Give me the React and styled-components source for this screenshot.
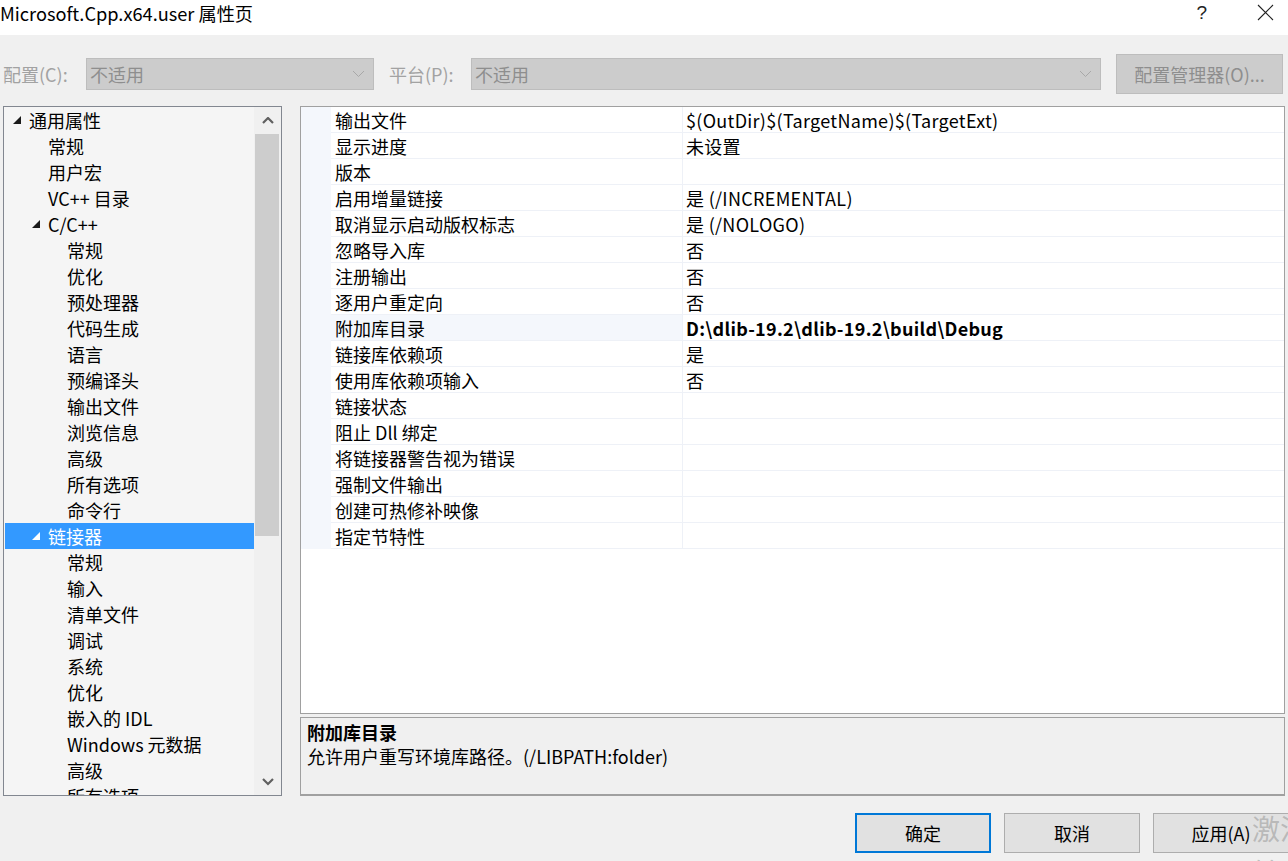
import React from "react";
import styled, { createGlobalStyle } from "styled-components";

const GlobalStyle = createGlobalStyle`
  html, body { margin: 0; padding: 0; }
  body {
    font-family: "Noto Sans CJK SC", "Noto Sans", sans-serif;
    background: #f0f0f0;
  }
  * { box-sizing: border-box; }
`;

const Window = styled.div`
  position: relative;
  width: 1288px;
  height: 861px;
  background: #f0f0f0;
  overflow: hidden;
  display: flex;
  flex-direction: column;
  color: #000;
  font-size: 18px;
`;

const TitleBar = styled.div`
  height: 35px;
  background: #fff;
  display: flex;
  align-items: center;
  justify-content: space-between;
  padding-bottom: 10px;
`;

const Title = styled.div`
  font-size: 18.2px;
  white-space: nowrap;
`;

const TitleControls = styled.div`
  display: flex;
  align-items: center;
  gap: 50px;
  padding-right: 14px;
`;

const HelpMark = styled.span`
  font-size: 19px;
  color: #222;
  font-family: "Liberation Sans", sans-serif;
`;

const ConfigRow = styled.div`
  display: flex;
  align-items: center;
  height: 40px;
  margin-top: 19px;
  padding-left: 3px;
  padding-right: 5px;
`;

const DimLabel = styled.span`
  color: #a2a2a2;
  white-space: nowrap;
  width: ${(p) => p.$w}px;
  margin-left: ${(p) => p.$ml || 0}px;
`;

const Select = styled.div`
  width: ${(p) => p.$w}px;
  height: 32px;
  background: #cccccc;
  border: 1px solid #bdbdbd;
  display: flex;
  align-items: center;
  justify-content: space-between;
  padding: 0 8px 0 3px;
  color: #8e8e8e;
`;

const DimButton = styled.div`
  margin-left: auto;
  width: 167px;
  height: 40px;
  background: #cccccc;
  border: 1px solid #bdbdbd;
  color: #8e8e8e;
  display: flex;
  align-items: center;
  justify-content: center;
  white-space: nowrap;
`;

const Main = styled.div`
  display: flex;
  gap: 17px;
  margin-top: 12px;
  padding-left: 3px;
  height: 690px;
`;

const TreePanel = styled.div`
  width: 279px;
  height: 690px;
  border: 1px solid #828790;
  background: #f5f5f5;
  display: flex;
  overflow: hidden;
`;

const TreeList = styled.div`
  flex: 1;
  padding-left: 1px;
  overflow: hidden;
`;

const TreeRow = styled.div`
  height: 26px;
  display: flex;
  align-items: center;
  padding-left: ${(p) => 6 + p.$level * 19}px;
  white-space: nowrap;
  background: ${(p) => (p.$selected ? "#3399ff" : "transparent")};
  color: ${(p) => (p.$selected ? "#fff" : "#000")};
`;

const Twisty = styled.span`
  width: 18px;
  display: inline-flex;
  align-items: center;
  padding-left: 2px;
`;

const ScrollBar = styled.div`
  width: 27px;
  background: #f0f0f0;
  display: flex;
  flex-direction: column;
`;

const ScrollArrow = styled.div`
  height: 27px;
  display: flex;
  align-items: center;
  justify-content: center;
`;

const ScrollThumb = styled.div`
  height: 402px;
  margin: 0 2px 0 1px;
  background: #cdcdcd;
`;

const ScrollSpace = styled.div`
  flex: 1;
`;

const RightColumn = styled.div`
  width: 985px;
  margin-left: 1px;
  display: flex;
  flex-direction: column;
  gap: 3px;
`;

const Grid = styled.div`
  height: 608px;
  background: #fff;
  border: 1px solid #a0a0a0;
`;

const GridRow = styled.div`
  display: flex;
  height: 26px;
`;

const Margin = styled.div`
  width: 30px;
  background: #f4f7fc;
`;

const NameCell = styled.div`
  width: 352px;
  padding-left: 4px;
  display: flex;
  align-items: center;
  border-bottom: 1px solid #eef1f7;
  border-right: 1px solid #eef1f7;
  background: ${(p) => (p.$selected ? "#f4f7fc" : "#fff")};
  white-space: nowrap;
`;

const ValueCell = styled.div`
  flex: 1;
  padding-left: 3px;
  display: flex;
  align-items: center;
  border-bottom: 1px solid #eef1f7;
  font-weight: ${(p) => (p.$bold ? 700 : 400)};
  letter-spacing: 0.3px;
  white-space: nowrap;
`;

const Description = styled.div`
  height: 79px;
  border: 1px solid #a0a0a0;
  border-bottom: 2px solid #a0a0a0;
  background: #f0f0f0;
  padding: 2px 6px;
  line-height: 24px;
`;

const DescTitle = styled.div`
  font-weight: 700;
`;

const Footer = styled.div`
  display: flex;
  gap: 13px;
  margin-top: 17px;
  padding-left: 855px;
`;

const DialogButton = styled.div`
  width: 136px;
  height: 40px;
  flex-shrink: 0;
  background: #e1e1e1;
  border: ${(p) => (p.$default ? "2px solid #0078d7" : "1px solid #adadad")};
  display: flex;
  align-items: center;
  justify-content: center;
  white-space: nowrap;
`;

const Watermark = styled.div`
  position: absolute;
  left: 1252px;
  top: 806px;
  font-size: 28px;
  line-height: 44px;
  color: rgba(150, 150, 150, 0.55);
  white-space: nowrap;
  pointer-events: none;
`;

const Chevron = ({ dir = "down", color = "#a8a8a8", w = 13, sw = 1 }) => (
  <svg width={w} height={w / 2 + 2} viewBox={`0 0 ${w} ${w / 2 + 2}`}>
    {dir === "down" ? (
      <polyline points={`1,1 ${w / 2},${w / 2} ${w - 1},1`} fill="none" stroke={color} strokeWidth={sw} />
    ) : (
      <polyline points={`1,${w / 2} ${w / 2},1 ${w - 1},${w / 2}`} fill="none" stroke={color} strokeWidth={sw} />
    )}
  </svg>
);

const Triangle = ({ color }) => (
  <svg width="8" height="8" viewBox="0 0 8 8">
    <polygon points="8,0 8,8 0,8" fill={color} />
  </svg>
);

const tree = [
  [0, "通用属性", true],
  [1, "常规"],
  [1, "用户宏"],
  [1, "VC++ 目录"],
  [1, "C/C++", true],
  [2, "常规"],
  [2, "优化"],
  [2, "预处理器"],
  [2, "代码生成"],
  [2, "语言"],
  [2, "预编译头"],
  [2, "输出文件"],
  [2, "浏览信息"],
  [2, "高级"],
  [2, "所有选项"],
  [2, "命令行"],
  [1, "链接器", true, true],
  [2, "常规"],
  [2, "输入"],
  [2, "清单文件"],
  [2, "调试"],
  [2, "系统"],
  [2, "优化"],
  [2, "嵌入的 IDL"],
  [2, "Windows 元数据"],
  [2, "高级"],
  [2, "所有选项"],
];

const props = [
  ["输出文件", "$(OutDir)$(TargetName)$(TargetExt)"],
  ["显示进度", "未设置"],
  ["版本", ""],
  ["启用增量链接", "是 (/INCREMENTAL)"],
  ["取消显示启动版权标志", "是 (/NOLOGO)"],
  ["忽略导入库", "否"],
  ["注册输出", "否"],
  ["逐用户重定向", "否"],
  ["附加库目录", "D:\\dlib-19.2\\dlib-19.2\\build\\Debug", true],
  ["链接库依赖项", "是"],
  ["使用库依赖项输入", "否"],
  ["链接状态", ""],
  ["阻止 Dll 绑定", ""],
  ["将链接器警告视为错误", ""],
  ["强制文件输出", ""],
  ["创建可热修补映像", ""],
  ["指定节特性", ""],
];

export default function App() {
  return (
    <>
      <GlobalStyle />
      <Window>
        <TitleBar>
          <Title>Microsoft.Cpp.x64.user 属性页</Title>
          <TitleControls>
            <HelpMark>?</HelpMark>
            <svg width="17" height="17" viewBox="0 0 17 17">
              <path d="M1 1 L16 16 M16 1 L1 16" stroke="#222" strokeWidth="1.1" fill="none" />
            </svg>
          </TitleControls>
        </TitleBar>

        <ConfigRow>
          <DimLabel $w={83}>配置(C):</DimLabel>
          <Select $w={288}>
            <span>不适用</span>
            <Chevron />
          </Select>
          <DimLabel $w={82} $ml={15}>平台(P):</DimLabel>
          <Select $w={630}>
            <span>不适用</span>
            <Chevron />
          </Select>
          <DimButton>配置管理器(O)...</DimButton>
        </ConfigRow>

        <Main>
          <TreePanel>
            <TreeList>
              {tree.map(([level, text, expanded, selected], i) => (
                <TreeRow key={i} $level={level} $selected={selected}>
                  <Twisty>{expanded ? <Triangle color={selected ? "#fff" : "#1a1a1a"} /> : null}</Twisty>
                  {text}
                </TreeRow>
              ))}
            </TreeList>
            <ScrollBar>
              <ScrollArrow>
                <Chevron dir="up" color="#606060" w={12} sw={2.2} />
              </ScrollArrow>
              <ScrollThumb />
              <ScrollSpace />
              <ScrollArrow>
                <Chevron dir="down" color="#606060" w={12} sw={2.2} />
              </ScrollArrow>
            </ScrollBar>
          </TreePanel>

          <RightColumn>
            <Grid>
              {props.map(([name, value, sel], i) => (
                <GridRow key={i}>
                  <Margin />
                  <NameCell $selected={sel}>{name}</NameCell>
                  <ValueCell $bold={sel}>{value}</ValueCell>
                </GridRow>
              ))}
            </Grid>
            <Description>
              <DescTitle>附加库目录</DescTitle>
              <div>允许用户重写环境库路径。(/LIBPATH:folder)</div>
            </Description>
          </RightColumn>
        </Main>

        <Footer>
          <DialogButton $default>确定</DialogButton>
          <DialogButton>取消</DialogButton>
          <DialogButton>应用(A)</DialogButton>
        </Footer>

        <Watermark>
          激活 Windows
          <br />
          转到“设置”以激活 Windows。
        </Watermark>
      </Window>
    </>
  );
}
